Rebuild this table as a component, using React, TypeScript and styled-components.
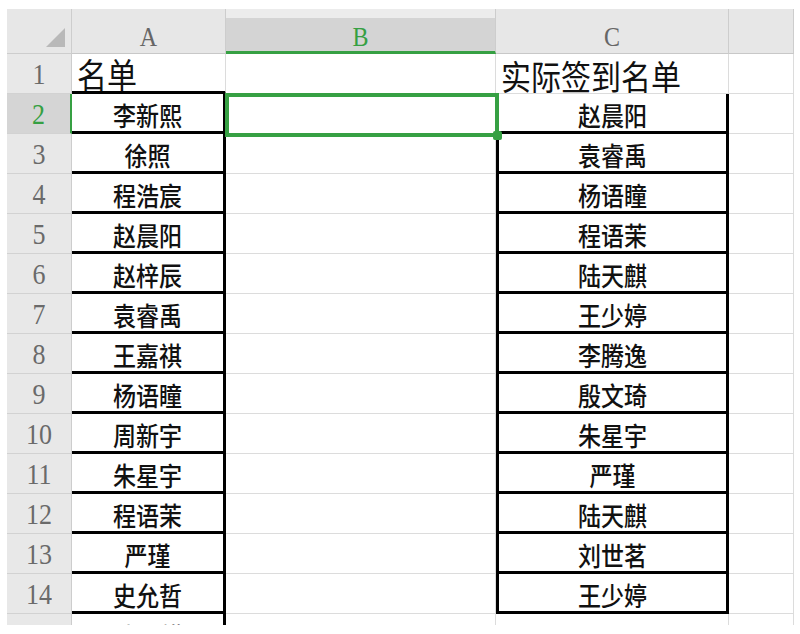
import React from 'react';
import styled, { createGlobalStyle, css } from 'styled-components';

const GREEN = '#36a043';

const Global = createGlobalStyle`
  html, body { margin: 0; padding: 0; background: #ffffff; }
  body { width: 800px; height: 634px; overflow: hidden; }
`;

const Page = styled.div`
  width: 800px;
  height: 634px;
  box-sizing: border-box;
  padding: 9px 6px 0 7px;
  background: #ffffff;
`;

const Sheet = styled.div`
  position: relative;
  display: grid;
  grid-template-columns: 65px 154px 270px 233px 65px;
  grid-template-rows: 45px repeat(15, 40px);
  height: 616px;
  overflow: hidden;
`;

const Corner = styled.div`
  background: #e7e7e7;
  border-right: 1px solid #cdcdcd;
  border-bottom: 1px solid #cdcdcd;
  box-sizing: border-box;
  display: flex;
  align-items: flex-end;
  justify-content: flex-end;
  padding: 0 6px 6px 0;
`;

const ColHead = styled.div<{ $sel?: boolean }>`
  box-sizing: border-box;
  background: #e7e7e7;
  border-right: 1px solid #cdcdcd;
  border-bottom: 1px solid #c8c8c8;
  display: flex;
  align-items: center;
  justify-content: center;
  padding-top: 11px;
  font-family: 'Liberation Serif', 'DejaVu Serif', serif;
  font-size: 24px;
  color: #666666;
  ${(p) =>
    p.$sel &&
    css`
      background: linear-gradient(#ececec 0 9px, #d4d4d4 9px);
      color: ${GREEN};
      border-bottom: 3px solid ${GREEN};
      padding-top: 13px;
    `}
`;

const RowHead = styled.div<{ $sel?: boolean }>`
  box-sizing: border-box;
  background: #e8e8e8;
  border-right: 1px solid #cdcdcd;
  border-bottom: 1px solid #d2d2d2;
  display: flex;
  align-items: center;
  justify-content: center;
  padding-top: 3px;
  font-family: 'Liberation Serif', 'DejaVu Serif', serif;
  font-size: 26px;
  color: #6a6a6a;
  ${(p) =>
    p.$sel &&
    css`
      background: #d5d5d5;
      color: ${GREEN};
      border-right: 2px solid ${GREEN};
    `}
`;

const Stretch = styled.span`
  display: inline-block;
  transform: scaleY(1.13);
  line-height: 1;
`;

type CellProps = { $bb?: boolean; $br?: boolean; $bl?: boolean; $title?: boolean };

const Cell = styled.div<CellProps>`
  box-sizing: border-box;
  background: #ffffff;
  border-right: 1px solid #dcdcdc;
  border-bottom: 1px solid #dcdcdc;
  display: flex;
  align-items: center;
  justify-content: center;
  padding-top: 6px;
  font-family: 'Noto Sans CJK SC', 'Noto Sans', sans-serif;
  font-size: 23px;
  font-weight: 500;
  color: #111111;
  white-space: nowrap;
  ${(p) => p.$bb && css`border-bottom: 3px solid #000;`}
  ${(p) => p.$br && css`border-right: 3px solid #000;`}
  ${(p) => p.$bl && css`border-left: 3px solid #000;`}
  ${(p) =>
    p.$title &&
    css`
      justify-content: flex-start;
      align-items: flex-end;
      padding: 0 0 3px 5px;
      font-size: 30px;
      font-weight: 400;
    `}
`;

const Selection = styled.div`
  position: absolute;
  left: 218px;
  top: 84px;
  width: 274px;
  height: 44px;
  box-sizing: border-box;
  border: 4px solid ${GREEN};
  pointer-events: none;
`;

const Handle = styled.div`
  position: absolute;
  left: 486px;
  top: 122px;
  width: 9px;
  height: 9px;
  border-radius: 2px;
  background: ${GREEN};
`;

const colA = ['李新熙', '徐照', '程浩宸', '赵晨阳', '赵梓辰', '袁睿禹', '王嘉祺', '杨语瞳', '周新宇', '朱星宇', '程语茉', '严瑾', '史允哲', '陆天麒'];
const colC = ['赵晨阳', '袁睿禹', '杨语瞳', '程语茉', '陆天麒', '王少婷', '李腾逸', '殷文琦', '朱星宇', '严瑾', '陆天麒', '刘世茗', '王少婷', ''];

export default function App() {
  return (
    <Page>
      <Global />
      <Sheet>
        <Corner>
          <svg width="19" height="19" viewBox="0 0 19 19">
            <polygon points="19,0 19,19 0,19" fill="#b9b9b9" />
          </svg>
        </Corner>
        <ColHead><Stretch>A</Stretch></ColHead>
        <ColHead $sel><Stretch>B</Stretch></ColHead>
        <ColHead><Stretch>C</Stretch></ColHead>
        <ColHead />

        <RowHead><Stretch>1</Stretch></RowHead>
        <Cell $title $bb><Stretch>名单</Stretch></Cell>
        <Cell />
        <Cell $title><Stretch>实际签到名单</Stretch></Cell>
        <Cell />

        {colA.map((a, i) => {
          const row = i + 2;
          const inC = row <= 14;
          const lastA = row === 15;
          return (
            <React.Fragment key={row}>
              <RowHead $sel={row === 2}><Stretch>{row}</Stretch></RowHead>
              <Cell $bb={!lastA} $br><Stretch>{a}</Stretch></Cell>
              <Cell />
              <Cell $bb={inC} $br={inC} $bl={inC}>{colC[i] && <Stretch>{colC[i]}</Stretch>}</Cell>
              <Cell />
            </React.Fragment>
          );
        })}
        <Selection />
        <Handle />
      </Sheet>
    </Page>
  );
}
